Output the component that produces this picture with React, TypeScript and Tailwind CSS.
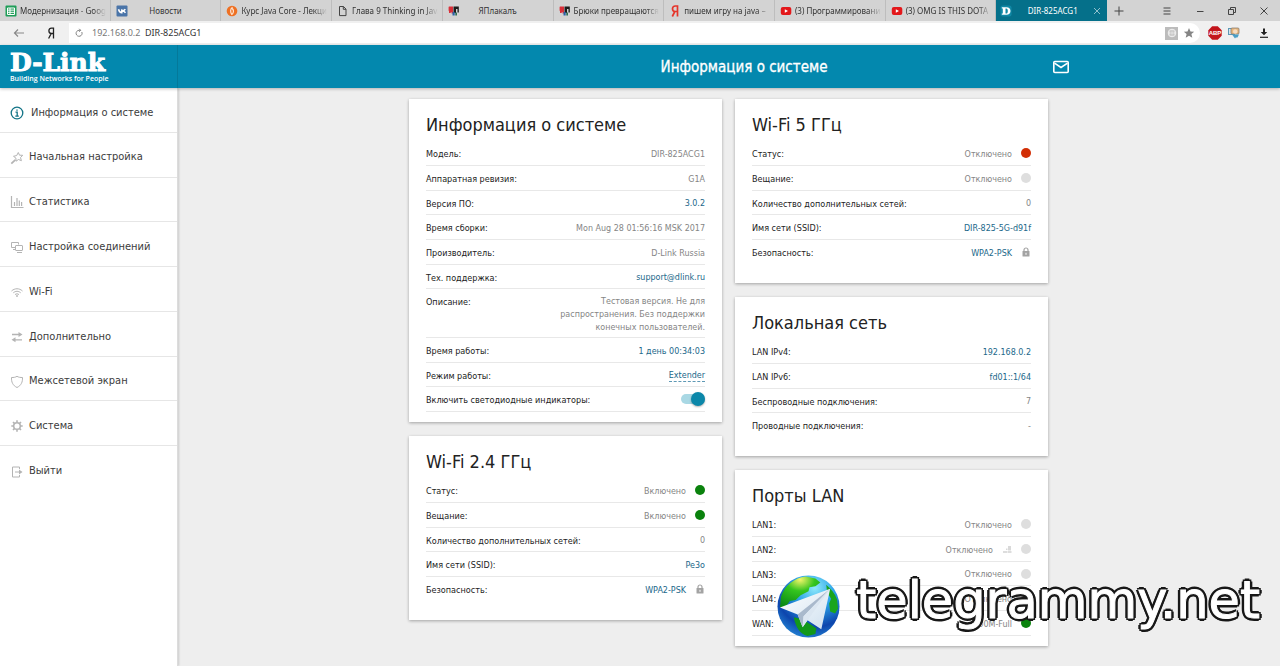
import type { ReactNode } from "react";

type Dot = "green" | "red" | "gray";

type InfoRow = {
  label: string;
  value?: string;
  tone?: "muted" | "link";
  dashed?: boolean;
  dot?: Dot;
  lock?: boolean;
  port?: boolean;
  toggle?: boolean;
  wrap?: boolean;
};

const dotColors: Record<Dot, string> = {
  green: "bg-[#0a820d]",
  red: "bg-[#d22e05]",
  gray: "bg-[#dedede]",
};

function SheetsIcon() {
  return (
    <svg viewBox="0 0 12 12" className="size-3">
      <rect x="0.5" y="0.5" width="11" height="11" rx="1" fill="#1f9d58" />
      <path d="M2.500 3h7v6.500h-7zM2.500 5.100h7M2.500 7.300h7M5 3v6.500" fill="none" stroke="#fff" />
    </svg>
  );
}

function VkIcon() {
  return (
    <svg viewBox="0 0 12 12" className="size-3">
      <rect x="0.5" y="0.5" width="11" height="11" rx="1" fill="#4a74a8" />
      <path d="M2.500 4.200c.6 2.300 1.500 3.500 3.300 3.500V4.300M9.300 4.200C8.700 5.200 7.800 6 6 6c1.800 0 2.800.8 3.500 1.800" fill="none" stroke="#fff" strokeWidth="1.500" />
    </svg>
  );
}

function CourseIcon() {
  return (
    <svg viewBox="0 0 12 12" className="size-3">
      <circle cx="6" cy="6" r="5.300" fill="#ee7023" />
      <path d="M6.500 2.200C4 4 4.200 7.500 6 9.800M6.300 3.500c1.600 1.800 1.400 4-.2 6" fill="none" stroke="#fde5d3" strokeWidth="1.200" />
    </svg>
  );
}

function PageIcon() {
  return (
    <svg viewBox="0 0 12 12" className="size-3">
      <path d="M2.500 1.500h4l2.500 2.600v6.500H2.500zM6.300 1.500v2.800H9" fill="none" stroke="#444" />
    </svg>
  );
}

function YapIcon() {
  return (
    <svg viewBox="0 0 12 12" className="size-3">
      <path d="M1 1.500h4v7H3.500V6.800L2.300 8H1V6.300L.6 5.500V2z" fill="#d9303a" />
      <path d="M5.500 1.500h5.300V7.500H9.500V4H8v4H5.500z" fill="#1c1c1c" />
      <path d="M4.500 7h2.200v3.500H4.500z" fill="#2b62a8" />
      <path d="M7.300 7.500h1.700v3H7.300z" fill="#2f6f52" />
    </svg>
  );
}

function YandexIcon() {
  return (
    <svg viewBox="0 0 12 12" className="size-3">
      <path d="M8.500 11.500V1H6.300C4.500 1 3.500 2.200 3.500 3.800c0 1.700 1 2.700 2.600 2.700h2.200M5.800 6.500L3.300 11.500" fill="none" stroke="#e5352b" strokeWidth="1.700" />
    </svg>
  );
}

function YoutubeIcon() {
  return (
    <svg viewBox="0 0 12 12" className="size-3">
      <rect x="0.800" y="2" width="10.500" height="8" rx="2" fill="#e3181b" />
      <path d="M4.800 4.200l3.200 1.800-3.200 1.800z" fill="#fff" />
    </svg>
  );
}

function DlinkIcon() {
  return (
    <svg viewBox="0 0 12 12" className="size-3">
      <rect x="0.500" y="0.500" width="11" height="11" rx="2" fill="#1088a5" />
      <path fillRule="evenodd" d="M1.800 2.200h4.700c2.500 0 4 1.400 4 3.800s-1.500 3.800-4 3.800H1.800V8.600h1V3.400h-1zM5.500 3.400v5.200h.8c1 0 1.500-.9 1.500-2.600s-.5-2.600-1.500-2.600z" fill="#fff" />
    </svg>
  );
}

const tabs: { title: string; icon: ReactNode; centered?: boolean }[] = [
  { title: "Модернизация - Google", icon: <SheetsIcon /> },
  { title: "Новости", icon: <VkIcon />, centered: true },
  { title: "Курс Java Core - Лекция", icon: <CourseIcon /> },
  { title: "Глава 9 Thinking in Java", icon: <PageIcon /> },
  { title: "ЯПлакалъ", icon: <YapIcon />, centered: true },
  { title: "Брюки превращаются", icon: <YapIcon /> },
  { title: "пишем игру на java –", icon: <YandexIcon /> },
  { title: "(3) Программирование", icon: <YoutubeIcon /> },
  { title: "(3) OMG IS THIS DOTA", icon: <YoutubeIcon /> },
];

function TabStrip() {
  return (
    <div className="flex h-[21px] bg-[#d3d3d3] text-[8px]">
      <div role="tablist" className="flex min-w-0 flex-1">
        {tabs.map((tab) => (
          <button
            key={tab.title}
            role="tab"
            aria-selected="false"
            className="flex min-w-0 flex-1 basis-0 items-center gap-[3px] border-r border-[#bdbdbd] pr-1 pl-[5px] text-left"
          >
            <span className="shrink-0">{tab.icon}</span>
            <span
              className={
                tab.centered
                  ? "flex-1 overflow-hidden pr-4 text-center whitespace-nowrap"
                  : "flex-1 overflow-hidden mask-r-from-85% whitespace-nowrap"
              }
            >
              {tab.title}
            </span>
          </button>
        ))}
        <button
          role="tab"
          aria-selected="true"
          className="flex min-w-0 flex-1 basis-0 items-center bg-[#05708a] pr-1.5 pl-1 text-white"
        >
          <DlinkIcon />
          <span className="flex-1 text-center whitespace-nowrap">DIR-825ACG1</span>
          <svg viewBox="0 0 8 8" className="size-2">
            <path d="M1 1l6 6M7 1L1 7" stroke="#8fc0cd" fill="none" />
          </svg>
        </button>
      </div>
      <div className="flex w-[173px] shrink-0 items-center justify-between pl-1 text-[#444]">
        <button aria-label="Новая вкладка" className="mr-6 flex size-4 items-center justify-center">
          <svg viewBox="0 0 10 10" className="size-2.5">
            <path d="M5 .5v9M.5 5h9" stroke="currentColor" fill="none" />
          </svg>
        </button>
        <button aria-label="Меню" className="flex w-8 justify-center">
          <svg viewBox="0 0 10 10" className="size-2.5">
            <path d="M1.500 2h7M1.500 5h7M1.500 8h7" stroke="currentColor" fill="none" />
          </svg>
        </button>
        <button aria-label="Свернуть" className="flex w-8 justify-center">
          <svg viewBox="0 0 10 10" className="size-2.5">
            <path d="M2 5.500h6.500" stroke="currentColor" fill="none" />
          </svg>
        </button>
        <button aria-label="Развернуть" className="flex w-8 justify-center">
          <svg viewBox="0 0 10 10" className="size-2.5">
            <path d="M1.500 3.500h5v5h-5zM3.500 3.500v-2h5v5h-2" stroke="currentColor" fill="none" />
          </svg>
        </button>
        <button aria-label="Закрыть" className="flex w-8 justify-center">
          <svg viewBox="0 0 10 10" className="size-2.5">
            <path d="M1.500 1.500l7 7M8.500 1.500l-7 7" stroke="currentColor" fill="none" />
          </svg>
        </button>
      </div>
    </div>
  );
}

function AddressBar() {
  return (
    <div className="flex h-6 items-center bg-[#f0f0f0] py-0.5">
      <button aria-label="Назад" className="ml-[13px] flex">
        <svg viewBox="0 0 12 10" className="h-2.5 w-3">
          <path d="M11 5H1.500M5 1.500L1.500 5 5 8.500" stroke="#888" strokeWidth="1.200" fill="none" />
        </svg>
      </button>
      <button aria-label="Яндекс" className="ml-5 flex">
        <svg viewBox="0 0 12 12" className="size-3">
          <path d="M8.500 11.500V1.200H6.500C4.600 1.200 3.900 2.400 3.900 3.800c0 1.600.8 2.700 2.400 2.700h2.200M6.200 6.500L3.600 11.500" fill="none" stroke="#222" strokeWidth="1.300" />
        </svg>
      </button>
      <div className="ml-3 flex h-full flex-1 items-center rounded-r-full bg-white pr-[5px] pl-[5px]">
        <button aria-label="Обновить" className="flex">
          <svg viewBox="0 0 10 10" className="size-2.5">
            <path d="M7.800 4A3 3 0 1 1 5 2.300h1.500M5.200.8l1.500 1.500-1.500 1.500" fill="none" stroke="#777" strokeWidth="0.900" />
          </svg>
        </button>
        <input
          aria-label="Адрес"
          defaultValue="192.168.0.2"
          className="ml-2 w-[53px] bg-transparent text-[9px] text-[#777] outline-none"
        />
        <span className="text-[9px] text-[#333]">DIR-825ACG1</span>
        <span className="flex-1" />
        <button aria-label="Перевести" className="flex size-[13px] items-center justify-center bg-[#bcbcbc]">
          <svg viewBox="0 0 10 10" className="size-2.5">
            <circle cx="5" cy="5" r="3.800" fill="none" stroke="#f2f2f2" />
            <path d="M1.500 5h7M5 1.500v7M3.200 2.500c-.8 1.800-.8 3.400 0 5M6.800 2.500c.8 1.800.8 3.400 0 5" fill="none" stroke="#f2f2f2" strokeWidth="0.700" />
          </svg>
        </button>
        <button aria-label="В закладки" className="ml-[5px] flex">
          <svg viewBox="0 0 12 12" className="size-3">
            <path d="M6 1l1.500 3.400 3.700.3-2.800 2.400.9 3.700L6 8.800l-3.300 2 .9-3.700L.8 4.700l3.700-.3z" fill="#858585" />
          </svg>
        </button>
      </div>
      <button aria-label="AdBlock" className="ml-2 flex">
        <svg viewBox="0 0 14 14" className="size-3.5">
          <path d="M4.200.3h5.600l3.900 3.900v5.600l-3.900 3.900H4.200L.3 9.800V4.200z" fill="#c3151c" />
          <text x="7" y="9.200" textAnchor="middle" fontSize="6" fontWeight="700" fill="#fff" fontFamily="Liberation Sans, sans-serif">ABP</text>
        </svg>
      </button>
      <button aria-label="Расширение" className="ml-1.5 flex">
        <svg viewBox="0 0 12 12" className="size-3">
          <rect x="0.500" y="1.500" width="6" height="6" fill="#d8e4ea" stroke="#5b97b5" />
          <rect x="3" y="1" width="8" height="6" rx="1" fill="#e7b77f" stroke="#7f7468" strokeWidth="0.700" />
          <circle cx="7.200" cy="4.500" r="2.200" fill="#f6dcc0" />
          <path d="M4 7.500h7l-1.500 3H7.800L7 11.500 5.500 9.500z" fill="#4a9fc6" />
        </svg>
      </button>
      <button aria-label="Загрузки" className="mr-2.5 ml-[18px] flex">
        <svg viewBox="0 0 12 12" className="size-3">
          <path d="M5 1.500h2v3.500h2.300L6 8.300 2.700 5H5z" fill="#222" />
          <path d="M2 10.300h8" stroke="#222" strokeWidth="1.200" />
        </svg>
      </button>
    </div>
  );
}

function Logo() {
  return (
    <a
      href="#home"
      className="block w-[178px] shrink-0 border-r border-[#04799a] pt-[7px] pl-2.5 text-white"
    >
      <span className="block font-['DejaVu_Serif',serif] text-[25px] leading-[22px] font-bold [-webkit-text-stroke:1px_white]">
        D-Link
      </span>
      <span className="block font-['Open_Sans',sans-serif] text-[7px] leading-[9px] font-semibold whitespace-nowrap">
        Building Networks for People
      </span>
    </a>
  );
}

function Header() {
  return (
    <header className="relative z-10 flex h-[43px] bg-[#0388ae] shadow-[0_1px_3px_rgba(0,0,0,0.25)]">
      <Logo />
      <div className="grid flex-1 grid-cols-[1fr_auto_1fr] items-center pl-[30px]">
        <span />
        <h1 className="text-[15px] leading-5 text-white [-webkit-text-stroke:0.3px_white]">
          Информация о системе
        </h1>
        <button aria-label="Сообщения" className="ml-[225px] flex w-5">
          <svg viewBox="0 0 18 16" className="h-4 w-[18px]">
            <rect x="1.800" y="2.500" width="14.400" height="11" rx="1" fill="none" stroke="#fff" strokeWidth="1.600" />
            <path d="M2.500 4.200L9 8.500l6.500-4.300" fill="none" stroke="#fff" strokeWidth="1.600" />
          </svg>
        </button>
      </div>
    </header>
  );
}

const menu: { title: string; drawing: ReactNode; active?: boolean }[] = [
  {
    title: "Информация о системе",
    active: true,
    drawing: (
      <>
        <circle cx="7" cy="7" r="5.800" strokeWidth="1.300" />
        <path d="M5.500 6.200h1.700v4M5.300 10.200h3.500" strokeWidth="1.300" />
        <path d="M6.300 3.500h1.400v1.300H6.300z" fill="currentColor" stroke="none" />
      </>
    ),
  },
  {
    title: "Начальная настройка",
    drawing: (
      <>
        <path d="M8.300 1.500l1.200 2.700 3.200.1-2.200 2.300.9 3.100-2.900-1.200-2.500 1.700-.1-3.100L3.500 5.300l3.200-.8z" />
        <path d="M5.300 8.800l-4 3.800" strokeWidth="1.800" />
      </>
    ),
  },
  {
    title: "Статистика",
    drawing: <path d="M1.500 1v11.500H13.500M4.500 11V7M7 11V3M9.300 11V5.500M11.600 11V7" strokeWidth="1.200" />,
  },
  {
    title: "Настройка соединений",
    drawing: (
      <>
        <path d="M5 7.500H1.500v-5h7v2M3 9.500h2" />
        <rect x="5.500" y="5.500" width="7" height="5" rx="0.500" />
        <path d="M7 12.500h5" />
      </>
    ),
  },
  {
    title: "Wi-Fi",
    drawing: (
      <>
        <path d="M1.500 6c3.300-3 7.700-3 11 0M3.300 7.800c2.300-2 5.100-2 7.400 0M5 9.600c1.300-1 2.700-1 4 0" />
        <circle cx="7" cy="11" r="0.900" fill="currentColor" stroke="none" />
      </>
    ),
  },
  {
    title: "Дополнительно",
    drawing: (
      <>
        <path d="M2 4.500h8M12 9.800H4.500" strokeWidth="1.300" />
        <path d="M8.500 2l4 2.500-4 2.500zM5.500 7.300l-4 2.500 4 2.500z" fill="currentColor" stroke="none" />
      </>
    ),
  },
  {
    title: "Межсетевой экран",
    drawing: <path d="M7 1.300c1.500 1 3.500 1.300 5.500 1.200.2 4.500-1.300 8-5.500 10-4.200-2-5.700-5.500-5.500-10 2 .1 4-.2 5.500-1.200z" />,
  },
  {
    title: "Система",
    drawing: (
      <>
        <circle cx="7" cy="7" r="3.300" strokeWidth="1.500" />
        <path d="M7 1.300v2M7 10.700v2M1.300 7h2M10.700 7h2M3 3l1.400 1.400M9.600 9.600L11 11M11 3L9.600 4.400M4.400 9.600L3 11" strokeWidth="1.600" />
      </>
    ),
  },
  {
    title: "Выйти",
    drawing: (
      <>
        <path d="M9.500 4V2h-7v10h7v-2M5 7h5" />
        <path d="M9 4.500L12.500 7 9 9.500z" fill="currentColor" stroke="none" />
      </>
    ),
  },
];

function Sidebar() {
  return (
    <aside className="w-[178px] shrink-0 border-r border-[#dcdcdc] bg-white shadow-[1px_0_2px_rgba(0,0,0,0.15)]">
      <nav className="grid h-[403px] auto-rows-fr">
        {menu.map((item) => (
          <a
            key={item.title}
            href="#menu"
            className={
              item.active
                ? "flex items-center gap-[7px] border-b border-[#e6e6e6] pt-1.5 pl-2.5 text-[11px] text-[#3c3c3c]"
                : "flex items-center gap-[5px] border-b border-[#e6e6e6] pt-1.5 pl-2.5 text-[11px] text-[#3c3c3c] last:border-b-0"
            }
          >
            <svg
              viewBox="0 0 14 14"
              className={item.active ? "size-3.5 text-[#137487]" : "size-3.5 text-[#b4b4b4]"}
              fill="none"
              stroke="currentColor"
            >
              {item.drawing}
            </svg>
            {item.title}
          </a>
        ))}
      </nav>
    </aside>
  );
}

function LockIcon() {
  return (
    <svg viewBox="0 0 10 10" className="size-2.5">
      <rect x="1.500" y="4" width="7" height="5.500" rx="0.500" fill="#a3a3a3" />
      <path d="M3 4.500V3a2 2 0 0 1 4 0v1.500" fill="none" stroke="#a3a3a3" strokeWidth="1.200" />
      <path d="M5 5.800v2" stroke="#fff" />
    </svg>
  );
}

function PortIcon() {
  return (
    <svg viewBox="0 0 10 10" className="size-2.5">
      <path d="M1 8h4.500M6 8h3.500" stroke="#d2d2d2" strokeWidth="1.500" fill="none" />
      <path d="M6 2h3v4.500H6zM4 4.500h1.500V6H4z" fill="#d9d9d9" />
    </svg>
  );
}

function Row({ row }: { row: InfoRow }) {
  const tone = row.tone === "link" ? "text-[#21678a]" : "text-[#858585]";
  return (
    <div
      className={
        row.wrap
          ? "flex h-[49px] items-start border-b border-[#e8e8e8] pt-1"
          : "flex h-[25px] items-center border-b border-[#e8e8e8] nth-[3n]:h-6"
      }
    >
      {row.toggle ? (
        <label htmlFor="led" className="pt-0.5 text-[9px] leading-[14px]">
          {row.label}
        </label>
      ) : (
        <span className="pt-0.5 text-[9px] leading-[14px] whitespace-nowrap">{row.label}</span>
      )}
      <div className="ml-auto flex items-center gap-[9px]">
        {row.value !== undefined &&
          (row.tone === "link" ? (
            <a
              href="#value"
              className={
                row.dashed
                  ? "mt-0.5 border-b border-dashed border-[#5f99b5] font-['DejaVu_Sans',sans-serif] text-[8px] leading-[11px] text-[#21678a]"
                  : "pt-0.5 font-['DejaVu_Sans',sans-serif] text-[8px] leading-[13px] text-[#21678a]"
              }
            >
              {row.value}
            </a>
          ) : (
            <span
              className={`pt-0.5 text-right font-['DejaVu_Sans',sans-serif] text-[8px] leading-[13px] ${tone} ${row.wrap ? "w-[146px]" : ""}`}
            >
              {row.value}
            </span>
          ))}
        {row.port && <PortIcon />}
        {row.dot && <span className={`size-2.5 rounded-full ${dotColors[row.dot]}`} />}
        {row.lock && <LockIcon />}
        {row.toggle && (
          <input
            id="led"
            type="checkbox"
            role="switch"
            defaultChecked
            className="flex h-2.5 w-6 appearance-none items-center justify-end rounded-full bg-[#a9d8e4] after:size-3.5 after:shrink-0 after:rounded-full after:bg-[#0b87a9] after:shadow-[0_1px_2px_rgba(0,0,0,0.3)] after:content-['']"
          />
        )}
      </div>
    </div>
  );
}

function Card({ title, rows, closed }: { title: string; rows: InfoRow[]; closed?: boolean }) {
  return (
    <section className="bg-white px-[17px] pt-3 text-[#222] shadow-[0_1px_3px_rgba(0,0,0,0.32)]">
      <h2 className="text-[18px] leading-7">{title}</h2>
      <div
        className={
          closed ? "mt-0.5 pb-[10px]" : "mt-0.5 pb-[18px] [&>*:last-child]:border-transparent"
        }
      >
        {rows.map((row) => (
          <Row key={row.label} row={row} />
        ))}
      </div>
    </section>
  );
}

const system: InfoRow[] = [
  { label: "Модель:", value: "DIR-825ACG1" },
  { label: "Аппаратная ревизия:", value: "G1A" },
  { label: "Версия ПО:", value: "3.0.2", tone: "link" },
  { label: "Время сборки:", value: "Mon Aug 28 01:56:16 MSK 2017" },
  { label: "Производитель:", value: "D-Link Russia" },
  { label: "Тех. поддержка:", value: "support@dlink.ru", tone: "link" },
  {
    label: "Описание:",
    value: "Тестовая версия. Не для распространения. Без поддержки конечных пользователей.",
    wrap: true,
  },
  { label: "Время работы:", value: "1 день 00:34:03", tone: "link" },
  { label: "Режим работы:", value: "Extender", tone: "link", dashed: true },
  { label: "Включить светодиодные индикаторы:", toggle: true },
];

const wifi24: InfoRow[] = [
  { label: "Статус:", value: "Включено", dot: "green" },
  { label: "Вещание:", value: "Включено", dot: "green" },
  { label: "Количество дополнительных сетей:", value: "0" },
  { label: "Имя сети (SSID):", value: "Pe3o", tone: "link" },
  { label: "Безопасность:", value: "WPA2-PSK", tone: "link", lock: true },
];

const wifi5: InfoRow[] = [
  { label: "Статус:", value: "Отключено", dot: "red" },
  { label: "Вещание:", value: "Отключено", dot: "gray" },
  { label: "Количество дополнительных сетей:", value: "0" },
  { label: "Имя сети (SSID):", value: "DIR-825-5G-d91f", tone: "link" },
  { label: "Безопасность:", value: "WPA2-PSK", tone: "link", lock: true },
];

const lan: InfoRow[] = [
  { label: "LAN IPv4:", value: "192.168.0.2", tone: "link" },
  { label: "LAN IPv6:", value: "fd01::1/64", tone: "link" },
  { label: "Беспроводные подключения:", value: "7" },
  { label: "Проводные подключения:", value: "-" },
];

const ports: InfoRow[] = [
  { label: "LAN1:", value: "Отключено", dot: "gray" },
  { label: "LAN2:", value: "Отключено", dot: "gray", port: true },
  { label: "LAN3:", value: "Отключено", dot: "gray" },
  { label: "LAN4:", value: "Отключено", dot: "gray" },
  { label: "WAN:", value: "100M-Full", dot: "green" },
];

function Watermark() {
  return (
    <div className="pointer-events-none absolute right-5 bottom-7 flex items-start gap-4">
      <svg viewBox="0 0 64 64" className="size-[63px]">
        <defs>
          <radialGradient id="sea" cx="0.6" cy="0.2" r="0.9">
            <stop offset="0" stopColor="#8fe9fb" />
            <stop offset="0.35" stopColor="#2ba3e8" />
            <stop offset="0.7" stopColor="#0d45ad" />
            <stop offset="1" stopColor="#2a95dd" />
          </radialGradient>
          <radialGradient id="land" cx="0.5" cy="0.1" r="0.9">
            <stop offset="0" stopColor="#f5f56a" />
            <stop offset="0.4" stopColor="#35c51f" />
            <stop offset="1" stopColor="#0b8a16" />
          </radialGradient>
          <linearGradient id="plane" x1="0" y1="0" x2="1" y2="1">
            <stop offset="0" stopColor="#ffffff" />
            <stop offset="1" stopColor="#cfe0ef" />
          </linearGradient>
        </defs>
        <circle cx="32" cy="32" r="31.500" fill="url(#sea)" />
        <path d="M4 22C8 10 18 3 29 1.500l10 2 5 4-5 4-6 1-1 4-8 4-5 5-6 1-5 7-5-1z" fill="url(#land)" />
        <path d="M50 10c5 4 9 9 11 15l1 9-3 5-5-2-1-8 2-5-4-6z" fill="#19a51d" />
        <path d="M17 43l9 2 14 9-1 6-8 2c-8-2-12-9-14-19z" fill="#12981a" />
        <path d="M54 14L3 33l18 7 5 13 5-7 14 9z" fill="url(#plane)" />
        <path d="M54 14L21 40l5 13 1-11z" fill="#a9b9cc" />
        <path d="M54 14L27 42l-1 11 5-7z" fill="#dbe6f1" />
      </svg>
      <span className="font-['DejaVu_Sans',sans-serif] text-[51px] leading-[52px] text-white [-webkit-text-stroke:1px_white] [text-shadow:3px_0_#181818,-3px_0_#181818,0_3px_#181818,0_-3px_#181818,2px_2px_#181818,-2px_2px_#181818,2px_-2px_#181818,-2px_-2px_#181818]">
        telegrammy.net
      </span>
    </div>
  );
}

export default function App() {
  return (
    <div className="relative flex min-h-screen flex-col overflow-hidden bg-[#eeeeee] font-['DejaVu_Sans_Condensed','DejaVu_Sans',sans-serif]">
      <div className="font-['Noto_Sans',sans-serif] text-[9px] leading-3 text-[#333]">
        <TabStrip />
        <AddressBar />
      </div>
      <Header />
      <div className="flex flex-1">
        <Sidebar />
        <main className="flex-1 pt-[11px] pr-px">
          <div className="mx-auto grid max-w-[639px] grid-cols-2 items-start gap-[13px]">
            <div className="grid gap-3.5">
              <Card title="Информация о системе" rows={system} closed />
              <Card title="Wi-Fi 2.4 ГГц" rows={wifi24} />
            </div>
            <div className="grid gap-3.5">
              <Card title="Wi-Fi 5 ГГц" rows={wifi5} />
              <Card title="Локальная сеть" rows={lan} />
              <Card title="Порты LAN" rows={ports} closed />
            </div>
          </div>
        </main>
      </div>
      <Watermark />
    </div>
  );
}
